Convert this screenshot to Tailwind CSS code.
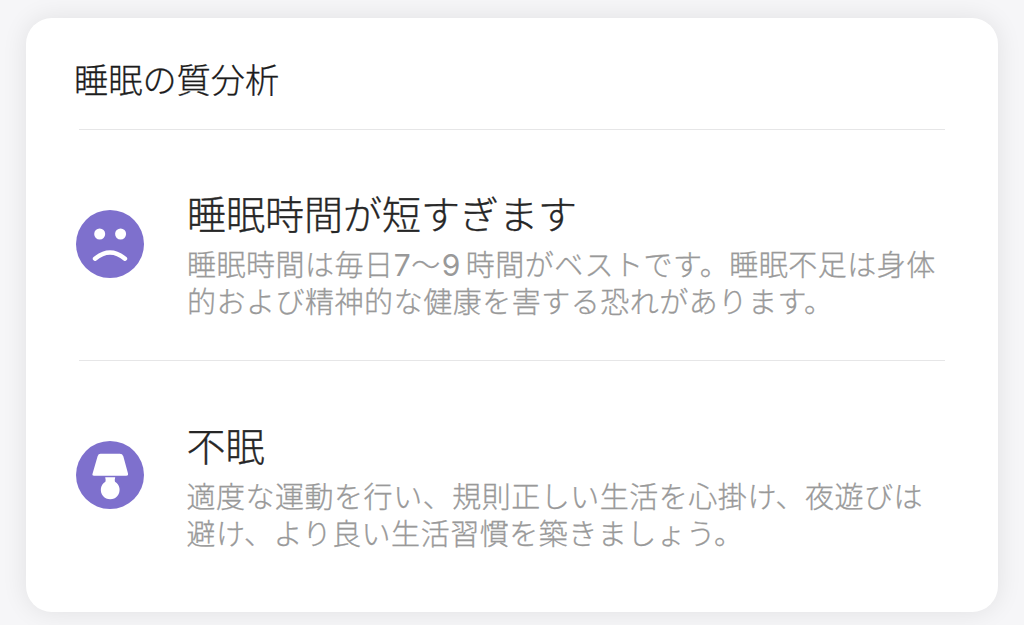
<!DOCTYPE html>
<html lang="ja">
<head>
<meta charset="utf-8">
<title>睡眠の質分析</title>
<script src="https://cdn.jsdelivr.net/npm/@tailwindcss/browser@4"></script>
</head>
<body class="h-[625px] overflow-hidden bg-[#f6f6f8] px-[26px] pt-[18px] font-['Noto_Sans_CJK_JP',sans-serif] font-light">
<main class="flex h-[594px] w-[972px] flex-col rounded-[26px] bg-white shadow-[0_0_26px_rgba(0,0,0,0.09)]">
  <h1 class="ml-[48px] mt-[35px] h-[50px] whitespace-nowrap text-[34.2px] leading-[50px] text-[#1c1c1c] [-webkit-text-stroke:0.3px_#1c1c1c]">睡眠の質分析</h1>
  <div class="ml-[53px] mt-[26px] h-px w-[866px] shrink-0 bg-[#e6e6e7]"></div>
  <section class="flex h-[230px] shrink-0 pl-[50px]">
    <svg class="mt-[80px] size-[68px] shrink-0" viewBox="0 0 68 68" fill="none">
      <circle cx="34" cy="34" r="34" fill="#7e70cd"/>
      <circle cx="23.7" cy="24" r="5.5" fill="#fff"/>
      <circle cx="44.6" cy="24" r="5.5" fill="#fff"/>
      <path d="M19 48.7Q34 36.3 49 48.7" stroke="#fff" stroke-width="4.4" stroke-linecap="round"/>
    </svg>
    <div class="ml-[43px] mt-[56px] whitespace-nowrap">
      <h2 class="h-[52px] text-[39px] leading-[52px] text-[#262626] [-webkit-text-stroke:0.35px_#262626]">睡眠時間が短すぎます</h2>
      <p class="mt-[7px] text-[29px] leading-[37px] tracking-[0.52px] text-[#999] [-webkit-text-stroke:0.3px_#999]">睡眠時間は毎日<span class="font-['Inter'] text-[30px] font-normal leading-none [-webkit-text-stroke:0]">7</span><span>〜</span><span class="ml-px mr-[5px] font-['Inter'] text-[30px] font-normal leading-none [-webkit-text-stroke:0]">9</span>時間がベストです。睡眠不足は身体<br>的および精神的な健康を害する恐れがあります。</p>
    </div>
  </section>
  <div class="ml-[53px] h-px w-[866px] shrink-0 bg-[#e6e6e7]"></div>
  <section class="flex h-[230px] shrink-0 pl-[50px]">
    <svg class="mt-[80px] size-[68px] shrink-0" viewBox="0 0 68 68">
      <circle cx="34" cy="34" r="34" fill="#7e70cd"/>
      <path fill="#fff" d="M24.5 12.8H43.8Q46.4 12.8 47.3 15.2L52 32.5Q52.5 34.7 50.2 34.7H18Q15.8 34.7 16.6 32.5L21.6 15.2Q22.4 12.8 24.5 12.8Z"/>
      <path fill="#fff" d="M29.2 36.2H39.2Q38.5 38.5 39 40.8A9.4 9.4 0 1 1 29.4 40.8Q29.9 38.5 29.2 36.2Z"/>
    </svg>
    <div class="ml-[42.5px] mt-[57px] whitespace-nowrap">
      <h2 class="h-[52px] text-[39px] leading-[52px] text-[#262626] [-webkit-text-stroke:0.35px_#262626]">不眠</h2>
      <p class="mt-[7px] text-[29px] leading-[37px] tracking-[0.52px] text-[#999] [-webkit-text-stroke:0.3px_#999]">適度な運動を行い、規則正しい生活を心掛け、夜遊びは<br>避け、より良い生活習慣を築きましょう。</p>
    </div>
  </section>
</main>
</body>
</html>
